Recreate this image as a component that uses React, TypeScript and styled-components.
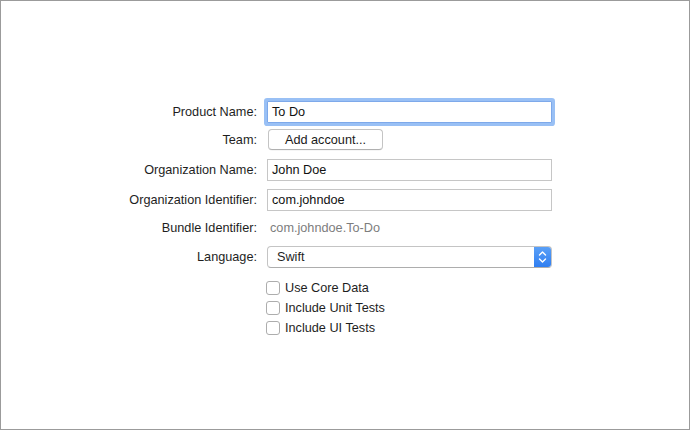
import styled, { createGlobalStyle } from "styled-components";

const GlobalStyle = createGlobalStyle`
  html, body {
    margin: 0;
    padding: 0;
    background: #ffffff;
  }
  * {
    box-sizing: border-box;
  }
`;

const Window = styled.div`
  width: 690px;
  height: 430px;
  border: 1px solid #9b9b9b;
  background: #ffffff;
  font-family: "Liberation Sans", Arial, sans-serif;
  font-size: 12.7px;
  color: #1e1e1e;
  padding-top: 100px;
`;

const Form = styled.div`
  display: flex;
  flex-direction: column;
`;

const Row = styled.div<{ $mt?: number; $h: number }>`
  display: flex;
  align-items: center;
  height: ${(p) => p.$h}px;
  margin-top: ${(p) => p.$mt ?? 0}px;
`;

const Label = styled.div`
  width: 257px;
  flex-shrink: 0;
  text-align: right;
  padding-right: 1px;
  white-space: nowrap;
`;

const Field = styled.div`
  margin-left: 9px;
  width: 285px;
  height: 100%;
`;

const TextField = styled.div<{ $focused?: boolean }>`
  width: 100%;
  height: 100%;
  display: flex;
  align-items: center;
  padding-left: 4px;
  background: #ffffff;
  border: 1px solid ${(p) => (p.$focused ? "#7ea9ea" : "#c6c6c6")};
  box-shadow: ${(p) => (p.$focused ? "0 0 0 3px #99c0f5" : "none")};
  border-radius: ${(p) => (p.$focused ? "1px" : "0")};
  color: #111;
`;

const AddButton = styled.button`
  margin-left: 1px;
  width: 115px;
  height: 100%;
  background: #ffffff;
  border: 1px solid #c4c4c4;
  border-bottom-color: #b0b0b0;
  border-radius: 4px;
  box-shadow: 0 0.5px 0.5px rgba(0, 0, 0, 0.08);
  font-family: inherit;
  font-size: 12.7px;
  color: #1a1a1a;
  padding: 0;
`;

const StaticValue = styled.div`
  padding-left: 3px;
  height: 100%;
  display: flex;
  align-items: center;
  color: #7d7d7d;
`;

const Popup = styled.div`
  width: 100%;
  height: 100%;
  display: flex;
  align-items: stretch;
  border: 1px solid #c4c4c4;
  border-bottom-color: #adadad;
  border-radius: 4px;
  background: #ffffff;
  overflow: hidden;
`;

const PopupText = styled.div`
  flex: 1;
  display: flex;
  align-items: center;
  padding-left: 9px;
`;

const Stepper = styled.div`
  width: 17px;
  display: flex;
  align-items: center;
  justify-content: center;
  background: linear-gradient(#5aa0f7, #2f7ef1);
`;

const Checks = styled.div`
  display: flex;
  flex-direction: column;
  margin-top: 10px;
  margin-left: 265px;
`;

const CheckRow = styled.label`
  display: flex;
  align-items: center;
  height: 20px;
`;

const Box = styled.span`
  width: 14px;
  height: 14px;
  border: 1px solid #adadad;
  border-radius: 3px;
  background: #ffffff;
  margin-right: 5px;
`;

const fields = [
  { label: "Organization Name:", value: "John Doe", mt: 9 },
  { label: "Organization Identifier:", value: "com.johndoe", mt: 8 },
];

const checks = ["Use Core Data", "Include Unit Tests", "Include UI Tests"];

export default function App() {
  return (
    <>
      <GlobalStyle />
      <Window>
        <Form>
          <Row $h={22}>
            <Label>Product Name:</Label>
            <Field>
              <TextField $focused>To Do</TextField>
            </Field>
          </Row>
          <Row $h={21} $mt={6}>
            <Label>Team:</Label>
            <Field>
              <AddButton>Add account...</AddButton>
            </Field>
          </Row>
          {fields.map((f) => (
            <Row key={f.label} $h={22} $mt={f.mt}>
              <Label>{f.label}</Label>
              <Field>
                <TextField>{f.value}</TextField>
              </Field>
            </Row>
          ))}
          <Row $h={20} $mt={7}>
            <Label>Bundle Identifier:</Label>
            <Field>
              <StaticValue>com.johndoe.To-Do</StaticValue>
            </Field>
          </Row>
          <Row $h={22} $mt={8}>
            <Label>Language:</Label>
            <Field>
              <Popup>
                <PopupText>Swift</PopupText>
                <Stepper>
                  <svg width="9" height="14" viewBox="0 0 9 14">
                    <path
                      d="M1.5 5 L4.5 2 L7.5 5 M1.5 9 L4.5 12 L7.5 9"
                      fill="none"
                      stroke="#ffffff"
                      strokeWidth="1.4"
                      strokeLinecap="round"
                      strokeLinejoin="round"
                    />
                  </svg>
                </Stepper>
              </Popup>
            </Field>
          </Row>
          <Checks>
            {checks.map((c) => (
              <CheckRow key={c}>
                <Box />
                {c}
              </CheckRow>
            ))}
          </Checks>
        </Form>
      </Window>
    </>
  );
}
